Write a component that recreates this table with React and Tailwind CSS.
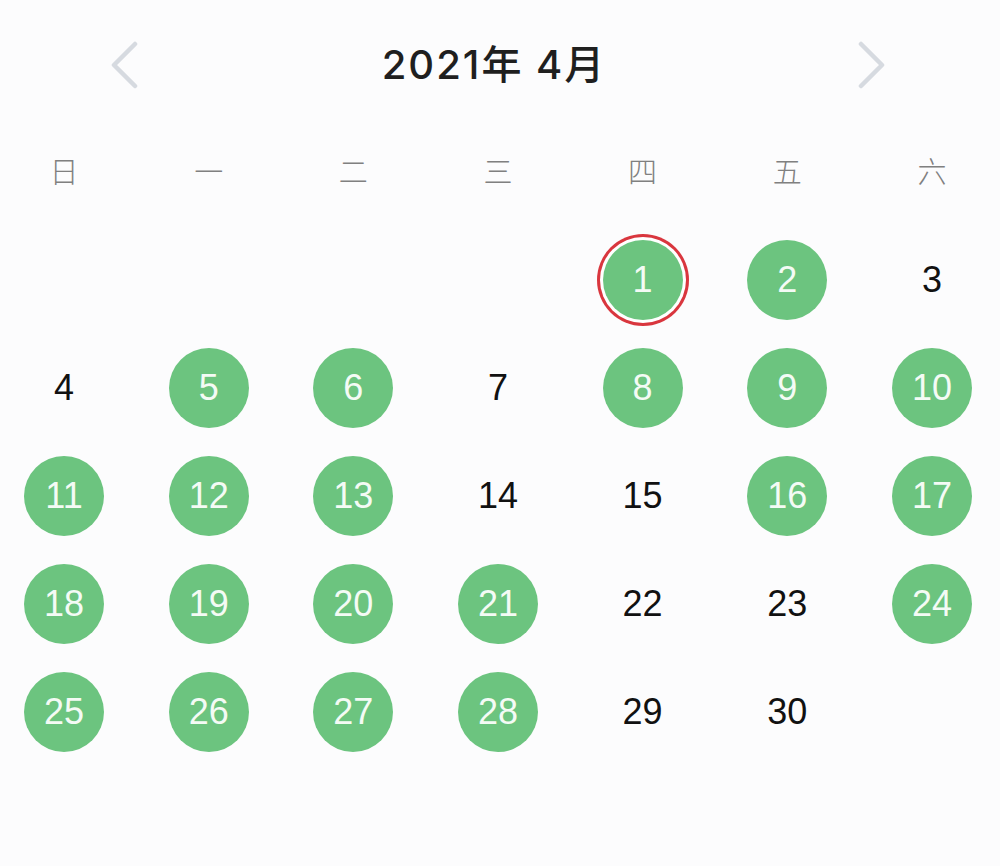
import React from "react";

const GREEN = new Set([1, 2, 5, 6, 8, 9, 10, 11, 12, 13, 16, 17, 18, 19, 20, 21, 24, 25, 26, 27, 28]);
const WEEK = ["日", "一", "二", "三", "四", "五", "六"];

// April 2021 starts on Thursday
const cells = [...Array(4).fill(null), ...Array.from({ length: 30 }, (_, i) => i + 1)];
while (cells.length % 7) cells.push(null);
const rows = [];
for (let i = 0; i < cells.length; i += 7) rows.push(cells.slice(i, i + 7));

function Chevron({ dir }) {
  return (
    <svg width="40" height="48" viewBox="0 0 40 48" fill="none">
      <path
        d={dir === "left" ? "M30 3 L9 24 L30 45" : "M10 3 L31 24 L10 45"}
        stroke="#d6dae0"
        strokeWidth="4.5"
        strokeLinecap="round"
        strokeLinejoin="round"
      />
    </svg>
  );
}

function Day({ n }) {
  if (n === null) return <div className="w-[80px] h-[80px]" />;
  const green = GREEN.has(n);
  const today = n === 1;
  return (
    <div
      className={
        "w-[80px] h-[80px] rounded-full flex items-center justify-center text-[36px] " +
        (green ? "bg-[#6cc47f] text-[#f4fbf5] " : "text-[#111] ") +
        (today ? "ring-[3px] ring-[#d9363e] ring-offset-[3px] ring-offset-white" : "")
      }
    >
      {n}
    </div>
  );
}

export default function App() {
  return (
    <div
      className="w-[1000px] h-[866px] bg-[#fcfcfd] overflow-hidden"
      style={{ fontFamily: '"Liberation Sans", "Noto Sans CJK SC", sans-serif' }}
    >
      {/* Header */}
      <div className="h-[130px] flex items-center pl-[105px] pr-[109px]">
        <Chevron dir="left" />
        <div className="flex-1 mr-[8px] text-center text-[40px] font-medium text-[#1f1f1f] tracking-[2px] font-[Inter,'Noto_Sans_CJK_SC',sans-serif]">
          2021年 4月
        </div>
        <Chevron dir="right" />
      </div>

      {/* Weekdays */}
      <div className="h-[88px] flex items-center justify-between pl-[24px] pr-[28px]">
        {WEEK.map((w) => (
          <div key={w} className="w-[80px] text-center text-[29px] font-light text-[#808080]">
            {w}
          </div>
        ))}
      </div>

      {/* Dates */}
      <div className="mt-[8px]">
        {rows.map((row, i) => (
          <div key={i} className="h-[108px] flex items-center justify-between pl-[24px] pr-[28px]">
            {row.map((n, j) => (
              <Day key={j} n={n} />
            ))}
          </div>
        ))}
      </div>
    </div>
  );
}
